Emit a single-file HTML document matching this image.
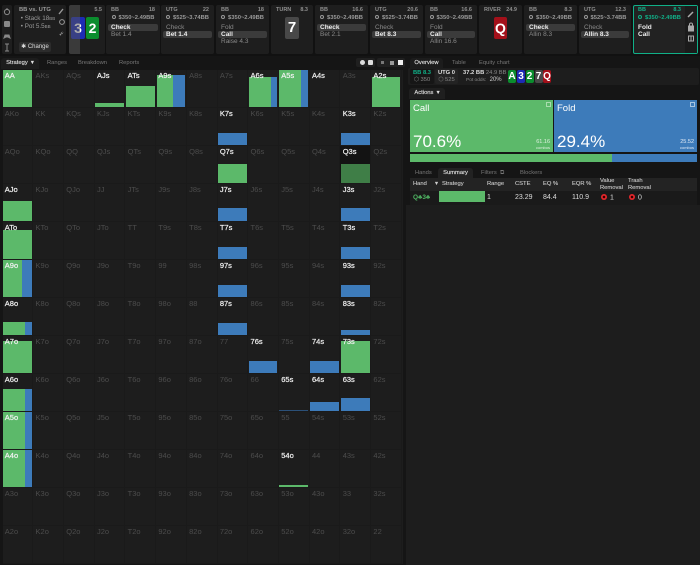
<!DOCTYPE html>
<html><head><meta charset="utf-8"><style>
*{box-sizing:border-box;margin:0;padding:0}
html,body{width:700px;height:565px;overflow:hidden;background:#151515;font-family:"Liberation Sans",sans-serif;color:#bbb}
#root{position:absolute;left:0;top:0;width:700px;height:565px;overflow:hidden;filter:blur(.3px)}
.a{position:absolute}
.top{left:0;top:0;width:700px;height:56px;background:#111}
.c{position:absolute;top:5px;height:49px;background:#1e1e1e;border-radius:2px;font-size:6px;line-height:7px}
.hd{position:absolute;left:5px;right:5px;top:2px;display:flex;justify-content:space-between;color:#8f8f8f;font-size:5.5px;font-weight:bold;line-height:7px}
.sz{position:absolute;left:0;right:0;top:9.5px;text-align:center;color:#999;font-size:5.8px;font-weight:bold;line-height:7px;white-space:nowrap}
.sz i{display:inline-block;width:4px;height:4px;border:.8px solid #999;border-radius:50%;margin-right:3px}
.os{position:absolute;left:2px;right:2px;top:18.5px;font-size:6.5px;color:#8a8a8a}
.os p{height:7px;line-height:7px;padding-left:3px;white-space:nowrap}
.os p.on{background:#3b3b3b;color:#eee;font-weight:bold;border-radius:2px}
.tab{position:absolute;font-size:5.8px;line-height:10px;color:#777;white-space:nowrap}
.tab.on{background:#1c1c1c;color:#ddd;border-radius:3px 3px 0 0;text-align:center;-webkit-text-stroke:.15px #ddd}
.g{position:absolute;left:2.5px;top:70px;width:400px;display:grid;grid-template-columns:repeat(13,30.73px);grid-auto-rows:38px;background:#1d1d1d}
.g div{position:relative;z-index:0;border-right:1px solid #1a1a1a;border-bottom:1px solid #1a1a1a;font-size:7.5px;line-height:9px;padding:1px 0 0 2.3px;color:#4c4c4c;white-space:nowrap;overflow:hidden}
.g div.h{color:#f2f2f2;-webkit-text-stroke:.2px #f2f2f2}
.g s{position:absolute;z-index:-1;left:.5px;right:.5px;bottom:0;display:flex;background:#3d7bba;text-decoration:none}
.g s.gr{background:#5cb96a}
.g s u{display:block;height:100%;background:#5cb96a}
.btn{position:absolute;top:70px;width:8px;height:13px;border-radius:2px;color:#fff;font-size:10px;font-weight:bold;line-height:13px;text-align:center}
.col{position:absolute;font-size:5.8px;line-height:6.5px;color:#ccc;-webkit-text-stroke:.1px #ccc;white-space:nowrap}
.val{position:absolute;top:194px;font-size:7px;line-height:8px;color:#ddd;white-space:nowrap}
.dot{display:inline-block;width:6px;height:6px;border-radius:50%;background:radial-gradient(circle,#300 28%,#e6262b 34%);vertical-align:-.5px;margin-right:3px}
</style></head><body><div id="root">
<div class="a top"></div>

<div class="c" style="left:2px;width:10px"></div>
<svg class="a" style="left:2px;top:5px" width="10" height="49" fill="none" stroke="#888" stroke-width="1">
<circle cx="5" cy="7" r="2.6"/><path d="M5 3v2"/>
<rect x="2.5" y="16.5" width="5" height="5" rx=".6" fill="#888"/>
<path d="M2 33l1-3h4l1 3-2-1H4z" fill="#888"/>
<path d="M3 39h4M3 46h4M5 39v7"/>
</svg>

<div class="c" style="left:14px;width:52px">
<div class="a" style="left:5px;top:2px;font-size:5.8px;font-weight:bold;color:#9a9a9a;white-space:nowrap">BB vs. UTG</div>
<div class="a" style="left:5px;top:10px;font-size:6.3px;color:#999;white-space:nowrap;line-height:8px">&nbsp;• Stack 18<span style="font-size:4.5px">BB</span><br>&nbsp;• Pot 5.5<span style="font-size:4.5px">BB</span></div>
<div class="a" style="left:5px;top:37px;width:32px;height:10px;background:#2c2c2c;border-radius:2px;font-size:6px;line-height:10px;text-align:center;color:#ddd">✱ Change</div>
</div>
<svg class="a" style="left:57px;top:5px" width="9" height="36" fill="none" stroke="#999" stroke-width="1">
<path d="M2 9l4-5" stroke-width="1.4"/><circle cx="5" cy="17" r="2.4"/><path d="M3 30l3-3" stroke-width="1.8" stroke-dasharray="1.2 .8"/>
</svg>

<div class="c" style="left:69px;width:36px">
<div class="hd" style="left:auto;right:3px"><span>5.5</span></div>
<div class="a" style="left:2px;top:12px;width:14px;height:22px;background:#1d2bb5;border-radius:2px;color:#fff;font-size:14px;font-weight:bold;line-height:22px;text-align:center">3</div>
<div class="a" style="left:17px;top:12px;width:13px;height:22px;background:#0b8d2e;border-radius:2px;color:#fff;font-size:14px;font-weight:bold;line-height:22px;text-align:center">2</div>
<div class="a" style="left:0;top:0;width:11px;height:49px;background:rgba(85,85,85,.5);border-radius:2px 0 0 2px"></div>
</div>

<div class="c" style="left:106px;width:54px"><div class="hd"><span>BB</span><span>18</span></div><div class="sz"><i></i>$350~2.49BB</div><div class="os"><p class="on">Check</p><p>Bet 1.4</p></div></div>
<div class="c" style="left:161px;width:53px"><div class="hd"><span>UTG</span><span>22</span></div><div class="sz"><i></i>$525~3.74BB</div><div class="os"><p>Check</p><p class="on">Bet 1.4</p></div></div>
<div class="c" style="left:216px;width:53px"><div class="hd"><span>BB</span><span>18</span></div><div class="sz"><i></i>$350~2.49BB</div><div class="os"><p>Fold</p><p class="on">Call</p><p>Raise 4.3</p></div></div>
<div class="c" style="left:271px;width:42px"><div class="hd"><span>TURN</span><span>8.3</span></div>
<div class="a" style="left:14px;top:12px;width:14px;height:22px;background:#484848;border-radius:2px;color:#fff;font-size:15px;font-weight:bold;line-height:22px;text-align:center">7</div></div>
<div class="c" style="left:315px;width:53px"><div class="hd"><span>BB</span><span>16.6</span></div><div class="sz"><i></i>$350~2.49BB</div><div class="os"><p class="on">Check</p><p>Bet 2.1</p></div></div>
<div class="c" style="left:370px;width:53px"><div class="hd"><span>UTG</span><span>20.6</span></div><div class="sz"><i></i>$525~3.74BB</div><div class="os"><p>Check</p><p class="on">Bet 8.3</p></div></div>
<div class="c" style="left:425px;width:52px"><div class="hd"><span>BB</span><span>16.6</span></div><div class="sz"><i></i>$350~2.49BB</div><div class="os"><p>Fold</p><p class="on">Call</p><p>Allin 16.6</p></div></div>
<div class="c" style="left:479px;width:43px"><div class="hd"><span>RIVER</span><span>24.9</span></div>
<div class="a" style="left:15px;top:12px;width:13px;height:22px;background:#a3101a;border-radius:2px;color:#fff;font-size:14px;font-weight:bold;line-height:22px;text-align:center">Q</div></div>
<div class="c" style="left:524px;width:53px"><div class="hd"><span>BB</span><span>8.3</span></div><div class="sz"><i></i>$350~2.49BB</div><div class="os"><p class="on">Check</p><p>Allin 8.3</p></div></div>
<div class="c" style="left:579px;width:52px"><div class="hd"><span>UTG</span><span>12.3</span></div><div class="sz"><i></i>$525~3.74BB</div><div class="os"><p>Check</p><p class="on">Allin 8.3</p></div></div>
<div class="c" style="left:633px;width:65px;border:1px solid #10b088;background:#222">
<div class="a" style="right:0;top:0;width:12px;height:47px;background:#1b1b1b"></div>
<div class="hd" style="left:4px;right:16px;top:1px;color:#10b088"><span>BB</span><span>8.3</span></div>
<div class="sz" style="right:12px;top:8.5px;color:#10b088"><i style="border-color:#10b088"></i>$350~2.49BB</div>
<div class="os" style="top:17.5px;left:1px;color:#eee;font-weight:bold"><p>Fold</p><p>Call</p></div>
<svg class="a" style="right:1px;top:2px" width="10" height="36" fill="none" stroke="#aaa" stroke-width="1"><path d="M2 9l5-5" stroke-width="1.5"/><rect x="2.5" y="18" width="5" height="5" fill="#aaa"/><path d="M3.5 18v-1.5a1.5 1.5 0 013 0V18"/><path d="M2.5 28h5v5h-5zM5 28v5"/></svg>
</div>

<div class="tab on" style="left:1px;top:58px;width:38px;height:11px">Strategy &nbsp;▾</div>
<div class="tab" style="left:47px;top:58px">Ranges</div>
<div class="tab" style="left:78px;top:58px">Breakdown</div>
<div class="tab" style="left:119px;top:58px">Reports</div>
<div class="a" style="left:356px;top:58px;width:19px;height:9px;background:#202020;border-radius:2px"></div>
<div class="a" style="left:377px;top:58px;width:28px;height:9px;background:#202020;border-radius:2px"></div>
<div class="a" style="left:360px;top:60px;width:5px;height:5px;background:#ddd;border-radius:50%"></div>
<div class="a" style="left:368px;top:60px;width:5px;height:5px;background:#ddd;border-radius:1px"></div>
<div class="a" style="left:380.5px;top:61px;width:3px;height:3px;background:#777"></div>
<div class="a" style="left:389.5px;top:60.5px;width:4px;height:4px;background:#999"></div>
<div class="a" style="left:398px;top:60px;width:5px;height:5px;background:#eee"></div>

<div class="g">
<div class="h">AA<s class="gr" style="height:37px"></s></div><div>AKs</div><div>AQs</div><div class="h">AJs<s class="gr" style="height:4px"></s></div><div class="h">ATs<s class="gr" style="height:21px"></s></div><div class="h">A9s<s style="height:32px"><u style="width:57%"></u></s></div><div>A8s</div><div>A7s</div><div class="h">A6s<s style="height:30px"><u style="width:76%"></u></s></div><div class="h">A5s<s style="height:37px"><u style="width:76%"></u></s></div><div class="h">A4s</div><div>A3s</div><div class="h">A2s<s class="gr" style="height:30px"></s></div>
<div>AKo</div><div>KK</div><div>KQs</div><div>KJs</div><div>KTs</div><div>K9s</div><div>K8s</div><div class="h">K7s<s style="height:12px"></s></div><div>K6s</div><div>K5s</div><div>K4s</div><div class="h">K3s<s style="height:12px"></s></div><div>K2s</div>
<div>AQo</div><div>KQo</div><div>QQ</div><div>QJs</div><div>QTs</div><div>Q9s</div><div>Q8s</div><div class="h">Q7s<s class="gr" style="height:19px"></s></div><div>Q6s</div><div>Q5s</div><div>Q4s</div><div class="h" style="background:#131313">Q3s<s class="gr" style="height:19px;background:#3f7e47"></s></div><div>Q2s</div>
<div class="h">AJo<s class="gr" style="height:20px"></s></div><div>KJo</div><div>QJo</div><div>JJ</div><div>JTs</div><div>J9s</div><div>J8s</div><div class="h">J7s<s style="height:13px"></s></div><div>J6s</div><div>J5s</div><div>J4s</div><div class="h">J3s<s style="height:13px"></s></div><div>J2s</div>
<div class="h">ATo<s class="gr" style="height:29px"></s></div><div>KTo</div><div>QTo</div><div>JTo</div><div>TT</div><div>T9s</div><div>T8s</div><div class="h">T7s<s style="height:12px"></s></div><div>T6s</div><div>T5s</div><div>T4s</div><div class="h">T3s<s style="height:12px"></s></div><div>T2s</div>
<div class="h">A9o<s style="height:37px"><u style="width:65%"></u></s></div><div>K9o</div><div>Q9o</div><div>J9o</div><div>T9o</div><div>99</div><div>98s</div><div class="h">97s<s style="height:12px"></s></div><div>96s</div><div>95s</div><div>94s</div><div class="h">93s<s style="height:12px"></s></div><div>92s</div>
<div class="h">A8o<s style="height:13px"><u style="width:77%"></u></s></div><div>K8o</div><div>Q8o</div><div>J8o</div><div>T8o</div><div>98o</div><div>88</div><div class="h">87s<s style="height:12px"></s></div><div>86s</div><div>85s</div><div>84s</div><div class="h">83s<s style="height:5px"></s></div><div>82s</div>
<div class="h">A7o<s class="gr" style="height:32px"></s></div><div>K7o</div><div>Q7o</div><div>J7o</div><div>T7o</div><div>97o</div><div>87o</div><div>77</div><div class="h">76s<s style="height:12px"></s></div><div>75s</div><div class="h">74s<s style="height:12px"></s></div><div class="h">73s<s class="gr" style="height:32px"></s></div><div>72s</div>
<div class="h">A6o<s style="height:22px"><u style="width:77%"></u></s></div><div>K6o</div><div>Q6o</div><div>J6o</div><div>T6o</div><div>96o</div><div>86o</div><div>76o</div><div>66</div><div class="h">65s<s style="height:1px;background:#2b5078"></s></div><div class="h">64s<s style="height:9px"></s></div><div class="h">63s<s style="height:13px"></s></div><div>62s</div>
<div class="h">A5o<s style="height:37px"><u style="width:77%"></u></s></div><div>K5o</div><div>Q5o</div><div>J5o</div><div>T5o</div><div>95o</div><div>85o</div><div>75o</div><div>65o</div><div>55</div><div>54s</div><div>53s</div><div>52s</div>
<div class="h">A4o<s style="height:37px"><u style="width:77%"></u></s></div><div>K4o</div><div>Q4o</div><div>J4o</div><div>T4o</div><div>94o</div><div>84o</div><div>74o</div><div>64o</div><div class="h">54o<s class="gr" style="height:2px"></s></div><div>44</div><div>43s</div><div>42s</div>
<div>A3o</div><div>K3o</div><div>Q3o</div><div>J3o</div><div>T3o</div><div>93o</div><div>83o</div><div>73o</div><div>63o</div><div>53o</div><div>43o</div><div>33</div><div>32s</div>
<div>A2o</div><div>K2o</div><div>Q2o</div><div>J2o</div><div>T2o</div><div>92o</div><div>82o</div><div>72o</div><div>62o</div><div>52o</div><div>42o</div><div>32o</div><div>22</div>
</div>

<div class="a" style="left:406px;top:56px;width:294px;height:509px;background:#151515"></div>
<div class="a" style="left:406px;top:205px;width:294px;height:360px;background:#1d1d1d"></div>
<div class="tab on" style="left:410px;top:58px;width:33px;height:11px">Overview</div>
<div class="tab" style="left:452px;top:58px">Table</div>
<div class="tab" style="left:479px;top:58px">Equity chart</div>
<div class="a" style="left:408px;top:68px;width:291px;height:17px;background:#1d1d1d;border-radius:2px"></div>
<div class="a" style="left:410px;top:69px;width:24px;height:15px;background:#161616;border-radius:2px;text-align:center;font-size:5.8px;line-height:7px;font-weight:bold;color:#10b088;padding-top:1px">BB 8.3<br><span style="color:#888;font-weight:normal">⬡ 350</span></div>
<div class="a" style="left:435px;top:69px;width:23px;height:15px;background:#232323;border-radius:2px;text-align:center;font-size:5.8px;line-height:7px;font-weight:bold;color:#ddd;padding-top:1px">UTG 0<br><span style="color:#888;font-weight:normal">⬡ 525</span></div>
<div class="a" style="left:463px;top:70px;font-size:5.8px;line-height:7px;font-weight:bold;color:#ddd;white-space:nowrap">37.2 BB <span style="color:#888;font-weight:normal">24.9 BB</span></div>
<div class="a" style="left:466px;top:77px;font-size:4.8px;line-height:7px;color:#888;white-space:nowrap">Pot odds: <span style="font-size:6px;color:#ccc;margin-left:2px">20%</span></div>
<div class="btn" style="left:508px;background:#0b8d2e">A</div>
<div class="btn" style="left:517px;background:#1d2bb5">3</div>
<div class="btn" style="left:525.5px;background:#0b8d2e">2</div>
<div class="btn" style="left:534.5px;background:#484848">7</div>
<div class="btn" style="left:543px;background:#a3101a">Q</div>

<div class="tab on" style="left:409px;top:88px;width:36px;height:11px;background:#1f1f1f">Actions &nbsp;▾</div>
<div class="a" style="left:410px;top:100px;width:143px;height:52px;background:#5cb96a;color:#fff">
<div class="a" style="left:3px;top:3px;font-size:9.5px;line-height:12px">Call</div>
<div class="a" style="left:3px;top:32px;font-size:17px;line-height:20px">70.6%</div>
<div class="a" style="right:3px;top:39px;font-size:5.5px;line-height:6px;text-align:right;color:#dff0e0">61.16<br><span style="font-size:4px">combos</span></div>
<div class="a" style="right:2px;top:2px;width:5px;height:5px;border:1px solid #a9dcae"></div>
</div>
<div class="a" style="left:554px;top:100px;width:143px;height:52px;background:#3d7bba;color:#fff">
<div class="a" style="left:3px;top:3px;font-size:9.5px;line-height:12px">Fold</div>
<div class="a" style="left:3px;top:32px;font-size:17px;line-height:20px">29.4%</div>
<div class="a" style="right:3px;top:39px;font-size:5.5px;line-height:6px;text-align:right;color:#dfe9f4">25.52<br><span style="font-size:4px">combos</span></div>
<div class="a" style="right:2px;top:2px;width:5px;height:5px;border:1px solid #a5c4e2"></div>
</div>
<div class="a" style="left:410px;top:154px;width:287px;height:8px;background:#3d7bba"></div>
<div class="a" style="left:410px;top:154px;width:202px;height:8px;background:#5cb96a"></div>

<div class="tab" style="left:415px;top:168px">Hands</div>
<div class="tab on" style="left:438px;top:168px;width:35px;height:11px;background:#222">Summary</div>
<div class="tab" style="left:481px;top:168px">Filters &nbsp;⧉</div>
<div class="tab" style="left:520px;top:168px">Blockers</div>
<div class="a" style="left:410px;top:178px;width:287px;height:13px;background:#232323"></div>
<div class="a" style="left:410px;top:191px;width:287px;height:14px;background:#1a1a1a"></div>
<div class="col" style="left:413px;top:181px">Hand</div>
<div class="col" style="left:435px;top:181px">▾</div>
<div class="col" style="left:442px;top:181px">Strategy</div>
<div class="col" style="left:487px;top:181px">Range</div>
<div class="col" style="left:515px;top:181px">CSTE</div>
<div class="col" style="left:543px;top:181px">EQ %</div>
<div class="col" style="left:572px;top:181px">EQR %</div>
<div class="col" style="left:600px;top:178px">Value<br>Removal</div>
<div class="col" style="left:628px;top:178px">Trash<br>Removal</div>
<div class="val" style="left:413px;color:#4fb563;font-size:6.5px;font-weight:bold">Q♣3♣</div>
<div class="a" style="left:438.5px;top:191px;width:46px;height:10.5px;background:#5cb96a"></div>
<div class="val" style="left:487px">1</div>
<div class="val" style="left:515px">23.29</div>
<div class="val" style="left:543px">84.4</div>
<div class="val" style="left:572px">110.9</div>
<div class="val" style="left:601px"><span class="dot"></span>1</div>
<div class="val" style="left:629px"><span class="dot"></span>0</div>
</div></body></html>
